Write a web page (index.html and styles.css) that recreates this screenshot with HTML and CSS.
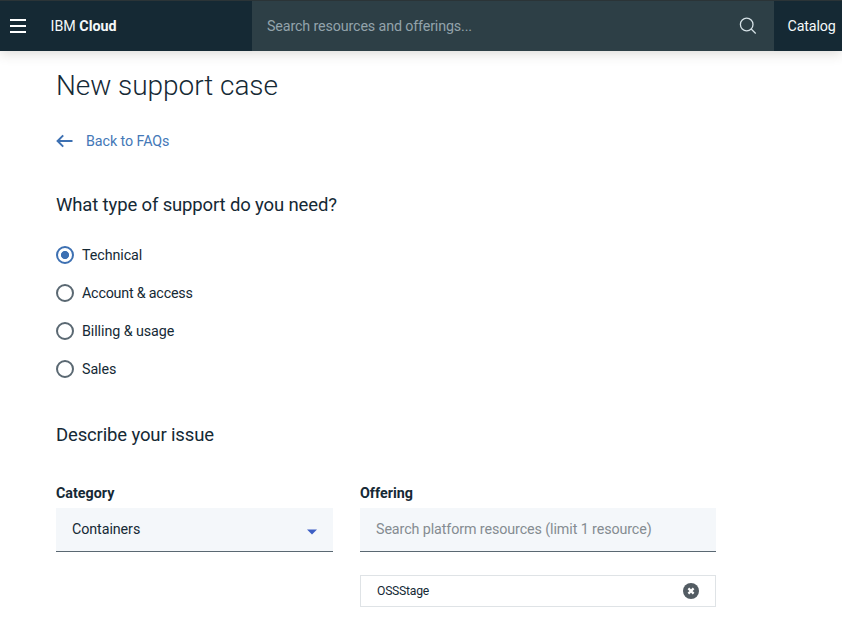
FILE: index.html
```html
<!DOCTYPE html>
<html lang="en">
<head>
<meta charset="utf-8">
<title>New support case</title>
<link rel="stylesheet" href="styles.css">
</head>
<body>
<header class="topbar">
  <div class="brand">
    <svg class="menu" width="18" height="16" viewBox="0 0 18 16"><path d="M1 2h16M1 8h16M1 14h16" stroke="#fff" stroke-width="2"/></svg>
    <span class="brand-name">IBM <b>Cloud</b></span>
  </div>
  <div class="search">
    <span class="search-text">Search resources and offerings...</span>
    <svg width="18" height="18" viewBox="0 0 18 18" fill="none" stroke="#d5e1e6" stroke-width="1.3"><circle cx="7.7" cy="7.5" r="6.3"/><path d="M12.2 12l4.5 4.5"/></svg>
  </div>
  <div class="catalog"><span>Catalog</span></div>
</header>
<main>
  <h1>New support case</h1>
  <a class="back"><svg width="17" height="14" viewBox="0 0 17 14" fill="none" stroke="#3d70b2" stroke-width="2"><path d="M16.5 7H2M7.2 1.4L1.6 7l5.6 5.6"/></svg><span>Back to FAQs</span></a>
  <h2 class="question">What type of support do you need?</h2>
  <div class="options">
    <label class="option"><i class="radio on"></i><span>Technical</span></label>
    <label class="option"><i class="radio"></i><span class="tight">Account &amp; access</span></label>
    <label class="option"><i class="radio"></i><span>Billing &amp; usage</span></label>
    <label class="option"><i class="radio"></i><span>Sales</span></label>
  </div>
  <h2 class="describe">Describe your issue</h2>
  <div class="fields">
    <div class="field">
      <b class="label">Category</b>
      <div class="input"><span>Containers</span><svg width="10" height="6" viewBox="0 0 10 6"><path d="M0 .5h10L5 5.5z" fill="#3d5fc4"/></svg></div>
    </div>
    <div class="field">
      <b class="label">Offering</b>
      <div class="input"><span class="placeholder">Search platform resources (limit 1 resource)</span></div>
      <div class="chip"><span>OSSStage</span><svg width="16" height="16" viewBox="0 0 16 16"><circle cx="8" cy="8" r="8" fill="#535c63"/><path d="M5.4 5.4l5.2 5.2M10.6 5.4l-5.2 5.2" stroke="#fff" stroke-width="2.2"/></svg></div>
    </div>
  </div>
</main>
</body>
</html>
```

FILE: styles.css
```css
* { box-sizing: border-box; }
body {
  margin: 0;
  height: 633px;
  overflow: hidden;
  background: #fff;
  color: #152935;
  font: 14.3px/20px Roboto, "Noto Sans", sans-serif;
  letter-spacing: -.08px;
  white-space: nowrap;
}
svg { display: block; flex: none; }
.topbar {
  display: flex;
  height: 51px;
  border-top: 1px solid #2b3437;
  background: #152934;
  color: #f4f8fa;
  box-shadow: 0 2px 12px rgba(70, 60, 45, .2);
}
.brand { width: 252px; flex: none; display: flex; align-items: center; padding-left: 9px; }
.brand-name { margin-left: 23.5px; letter-spacing: 0; }
.search {
  width: 522px;
  flex: none;
  display: flex;
  align-items: center;
  justify-content: space-between;
  padding: 0 17px 0 15px;
  background: #2d3f46;
  color: #93a3ab;
}
.search-text { letter-spacing: -.14px; }
.catalog { display: flex; align-items: center; padding-left: 13.5px; letter-spacing: -.15px; }
main { padding: 16px 56px 0; }
h1 { margin: 0; font-size: 28px; line-height: 38px; font-weight: 300; letter-spacing: -.05px; }
.back { display: flex; align-items: center; height: 20px; margin-top: 26px; color: #4478b7; }
.back span { margin-left: 13px; }
h2 { margin: 0; font-size: 18.5px; line-height: 26px; font-weight: 400; letter-spacing: -.14px; }
.question { margin-top: 41px; }
.options { display: grid; gap: 18px; margin-top: 27px; }
.option { display: flex; align-items: center; height: 20px; }
.tight { letter-spacing: -.21px; }
.radio { width: 18px; height: 18px; border: 2px solid #5a6872; border-radius: 50%; margin-right: 8px; }
.radio.on { border-color: #3d70b2; background: radial-gradient(circle, #3d70b2 3.7px, #fff 4.4px); }
.describe { margin-top: 43px; }
.fields { display: grid; grid-template-columns: 277px 356px; gap: 27px; margin-top: 35px; }
.label { display: block; height: 20px; margin-bottom: 5px; letter-spacing: 0; }
.input {
  display: flex;
  align-items: center;
  justify-content: space-between;
  height: 44px;
  padding: 0 16px;
  border-bottom: 1px solid #5a6872;
  background: #f4f7fa;
}
.input span { padding-bottom: 2px; }
.input svg { margin-top: 5px; }
.placeholder { color: #858c91; letter-spacing: -.1px; }
.chip {
  display: flex;
  align-items: center;
  justify-content: space-between;
  height: 32px;
  margin-top: 23px;
  padding: 0 16px;
  border: 1px solid #dfe3e6;
  font-size: 12.2px;
  letter-spacing: -.25px;
}
```
